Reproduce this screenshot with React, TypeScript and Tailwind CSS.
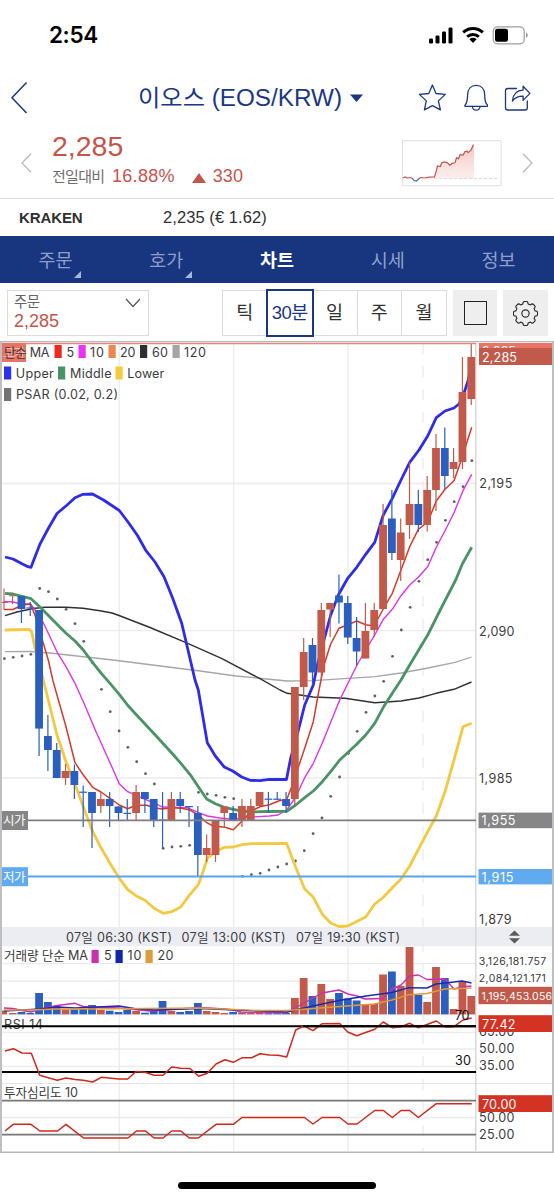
import React from "react";

const RED = "#c25a4b";
const BLUE = "#2b5fbf";

const candleX = (i: number) => 3.8 + i * 8.82;

// [index, direction, high, body top, body bottom, low, volume top]
type Candle = [number, "u" | "d", number, number, number, number, number];
const candles: Candle[] = [
  [2, "d", 596, 596, 609, 623, 1012],
  [3, "d", 602, 607.4, 608.6, 616, 1013],
  [4, "d", 610, 610, 728.6, 756, 993],
  [5, "d", 715, 736, 750, 771, 1002],
  [6, "d", 743, 750, 778, 778, 1006],
  [7, "u", 764, 771, 778, 785, 1009.5],
  [8, "d", 764.5, 771, 785, 799, 1009.5],
  [9, "d", 785.5, 791.6, 792.8, 827, 1009],
  [10, "d", 792, 792, 813, 848, 1005],
  [11, "u", 792, 799, 806, 813, 1010],
  [12, "d", 792, 799, 806, 827, 1010.7],
  [13, "d", 806, 806.5, 813, 820, 1012],
  [14, "d", 799, 812.8, 814, 820, 1010],
  [15, "u", 785, 792, 813, 820, 1011],
  [16, "d", 792, 792, 799, 813, 1012.7],
  [17, "d", 799, 799, 820, 827, 1011],
  [18, "d", 792, 819.5, 820.5, 848, 1001],
  [19, "u", 792, 799, 820, 820, 1011],
  [20, "d", 792, 799, 806, 813, 1012],
  [21, "d", 806, 806, 807.2, 827, 1011],
  [22, "d", 806, 813, 855, 876, 1003],
  [23, "u", 834.5, 848, 855, 862, 1011],
  [24, "u", 820, 820, 855, 862, 1012],
  [25, "u", 806, 806.5, 813, 827, 1013],
  [26, "d", 806, 813, 820, 820, 1012],
  [27, "u", 799, 806, 820, 827, 1012.5],
  [28, "u", 799, 806, 820, 820, 1013],
  [29, "u", 792, 792, 806, 806, 1013],
  [30, "d", 792, 798.6, 799.8, 813, 1013.2],
  [31, "d", 792, 798.6, 799.8, 800, 1013.2],
  [32, "d", 792, 799, 806, 813, 1013],
  [33, "u", 687, 687, 799, 806, 998],
  [34, "u", 638, 652, 687, 700, 978],
  [35, "d", 638, 645, 672.5, 685, 996],
  [36, "u", 603, 610, 672.5, 680, 984],
  [37, "u", 603, 603, 609.5, 637, 999],
  [38, "d", 574.5, 595.5, 602.5, 623.5, 993],
  [39, "d", 596, 603, 637.5, 644, 998.5],
  [40, "d", 617, 638, 651.5, 665.5, 1000.5],
  [41, "u", 603, 631, 658.5, 658.5, 1004],
  [42, "u", 603, 610, 630, 637, 1004],
  [43, "u", 504, 525, 609, 609, 974.5],
  [44, "d", 490, 518.5, 553, 560, 971.5],
  [45, "u", 518.5, 532.5, 560, 581, 986],
  [46, "u", 462, 504, 525, 539, 947],
  [47, "d", 490, 504, 525, 532, 995],
  [48, "u", 476, 490, 525, 531.5, 1002],
  [49, "u", 434, 448, 490, 511, 967],
  [50, "d", 427.5, 448, 476, 489, 978],
  [51, "u", 448, 462, 469, 478, 1009],
  [52, "u", 357, 392, 462, 469, 981],
  [53, "u", 344, 357, 399, 405, 996],
];

const lines = {
  ma120: "5,651.7 30,651.5 50,653 113,660 200,671 236,676 287,681 313,680.7 375,676.7 401,673 428,668 455,662.3 471.7,657",
  ma60: "5,615.7 17,612 33,608.5 45,607.3 66,607.3 83,608.3 100,610.7 112,613 119,615.5 150,627.5 186,642.7 222,658.7 260,678.7 280,690 287,693.3 300,695 313,697 345,698.3 374.7,702.7 401,701 419,698 436,693.3 454,689.3 471.5,682",
  lower: "5,630 29,629.3 31.7,632 35,648 43.3,680 48.3,700 57,735 66,761.7 76,786.7 83.3,806.7 92.7,831.7 101.3,848.3 110,863.3 119.3,878.3 127.7,889.7 136,895.7 145,900.3 154,908.3 163.3,913.3 171.7,911.7 180.7,907 189.3,895.3 198.3,884.7 202.7,872.7 207.3,858.3 215.3,851.7 224.3,847.3 233.3,847 242.3,844.7 251.7,843.7 286.7,843.5 295.7,867.3 304.7,889 313.3,897.3 322.3,914.3 330.7,923 339,926.5 347.7,926 365.7,917 374.7,904 383.3,897.3 392.3,887.7 401,879 409.7,866 427.7,831.7 436.3,816 445,791.7 454,760 463,726.7 471.7,723.3",
  upper: "5,557 13,559 22.5,564 28,566.7 31,567.3 39.7,544.7 48,529 57,513.5 66.5,505.5 75,497.7 83,494.3 92.5,494 103.5,500 119.3,510.5 128,522 137.5,535.5 146,550.7 155,562 164,576.7 172.7,598.3 181.7,623.3 195,680 198.3,690 207.3,742.7 215.3,756 224.3,767 232.7,771 241.7,777 250,780.3 260,780.6 269.3,779.3 286.5,779.5 290.7,758 298,731.7 304.7,705 313.3,685 317.3,665 324,640 330.7,615 338.3,595 347.7,578.3 356.7,567.3 365.7,554.3 374.7,542.3 383.3,515 392.3,498.3 401,480 409.7,462.3 419,450 427.7,436 436.3,417.7 445,411 454,408 459,404 464,393.3 468.3,380 471,366",
  middle: "5,593.3 13,594 31,598.7 40,607 66,633.3 75,641 83.3,650 92.7,662.7 101.3,673.3 110,683.3 119.3,694.3 128.3,706 137.3,715.7 155,734.7 172.7,754 181.7,764.3 190.7,775.3 199.3,788.3 206.7,799 215.3,803.7 224.3,807.3 238,810.3 251.7,812 267,811.5 286.7,811.3 295.7,805 304.7,797.7 313.3,791 322.3,781.7 330.7,771.7 339.7,760 356.7,744.3 365.7,735 374.7,723.3 383.3,707.3 392.3,693.3 401,680 409.7,665 427.7,635 440.7,609 455.7,580 462.3,564 471.7,547.3",
  ma10: "3.7,601.5 13,602 22,604 30.5,604 41,618 48.3,633.3 57.7,653.3 66,666.7 75,683.3 83.3,701.7 96.7,733.3 110,762.7 119.3,783.7 127.7,791.7 136,795.3 142,798 155,803.3 162.3,807 187,807.7 198.7,812.7 207.3,816 220,818 233,819.3 251.7,817 269.3,816 278,815 286.7,810 295.7,797 304.7,777.7 313.3,763.3 322.3,743 339.7,700 357,665 365.7,650 374.7,635 383.3,619.3 392.3,609.3 401,595.7 409.7,585 418.3,577.3 427.7,566.7 436.3,547.3 445,530.7 454,512.7 463,490.7 471.7,474.3",
  ma5: "3.7,609.5 13,609.5 22,605 30.5,604 36,618 43.3,643.3 48.3,660 53,681 66,726.7 75,762.7 83.3,775 92.7,787.3 101,792 110,798.3 119.3,805 127.7,808.7 136,805.3 146.7,805.3 154,807.7 162.3,809 171.7,807.7 181.7,808.3 190,810 198.7,815.3 206.7,822.7 213.3,826 225,827.3 233.3,829.7 242.3,820.7 251.7,810.7 260,806.7 269.3,804.7 279.3,800.7 286.7,799.5 292,786 304.7,748.3 313.3,721.7 319,690 324,665 330.7,644 339,628.3 347.7,624.7 356.7,621 365.7,624.7 374,626 383.3,609 392.3,593.3 401,570 409.7,546.7 418.3,529.3 427.7,522 436.3,501 445,489.3 454,480.7 460.7,461.7 471.7,427.3",
  vol5: "4,1008 13,1008.5 22,1010.5 31,1012 40,1009 57,1005.5 75,1003.3 83,1006.5 92,1007 119,1008 150,1011 200,1007.5 225,1009 233,1010 241,1012 286,1013 304,1003 322,993 339,990 348,994 357,996 365,999 383,998.5 392,989 401,985 409.7,976 418.5,975 427,979.5 445,979 454,989 462,987 471.5,986",
  vol10: "4,1011 40,1009 57,1007 75,1008 119,1006 137,1009 155,1010 200,1008.5 260,1011 287,1012 313,1006 339,1000.5 366,996 392,992.5 409,987.7 427,988 436,984 454,982 462,981 471.5,983",
  vol20: "4,1010 30,1010 57,1009 90,1009 200,1008 260,1010.5 287,1010.5 340,1006.5 374,1004 392,1000 409,994.7 427,993.5 445,989 471.5,988",
  rsi: "5,1051 13.3,1048.7 22,1053 31.3,1053.3 39.7,1075.3 48.3,1077.7 57.3,1080.3 66,1078 75,1079.5 83.3,1080.3 92.7,1082 101.3,1077.3 119,1079 127.7,1079 136,1071.5 145,1072.3 154,1075.3 163,1075.3 171.7,1067 180.7,1068.3 190,1068.5 198.7,1076.3 207.3,1073.3 216,1064 225,1059.7 233.3,1062.3 242.3,1057.7 251.7,1057.7 260,1053.7 269.3,1055 278,1055.3 286.7,1057 295.7,1030 304,1026 313,1030.7 322.3,1023.7 339.7,1023.5 347.7,1032 356.7,1035.7 374.7,1029.3 383.3,1022 392.3,1027.7 401,1026.7 409.7,1023.3 418.3,1027.7 427.7,1024.3 436.3,1021 445,1027 454,1026.7 463,1020 471.7,1018",
  mind: "5,1131 13.3,1124.3 31,1124.3 40,1131 57.5,1131 66,1124.3 83.5,1138 128,1138 136.5,1131 145.5,1131 154,1138 163,1138 171.7,1131 180.7,1131 189.3,1138 198.3,1138 216,1124.3 233.3,1124.3 242,1117.5 304.5,1117.5 313,1124 322,1117.5 339.7,1117.5 348,1124 357,1124 374.7,1110.5 383.5,1110.5 392.3,1117.5 401,1110.5 409.7,1110.5 418.3,1117.5 436.3,1103.7 471.7,1103.7",
};

const psar = [
  658.7, 657.3, 656, 654.3, 588.5, 591.7, 599, 609.3, 623.7, 641.3, 662.7, 689.3, 711.7, 731, 747.3, 761.7, 773.7, 784,
  848.3, 847, 846.3, 845.3, 792.3, 794, 795.3, 797.3, 798.7, 876.3, 874.7, 873.3, 870, 867, 864, 861, 850.7,
  833.7, 818, 796.3, 777, 753.3, 731.3, 712.3, 696, 681.3, 656.3, 630, 607.3, 581.3, 559.7, 542.3, 520.3, 501.7, 486.7, 460.7,
];

type TProps = { x: number; y: number; w: number; s?: number; fill?: string; children: string };
const T = ({ x, y, w, s = 12.6, fill = "#3c3c3c", children }: TProps) => (
  <text x={x} y={y} textLength={w} fontSize={s} fill={fill}>
    {children}
  </text>
);

const swatches: [number, number, string][] = [
  [55, 345, "#ea2a1e"], [79, 345, "#ea33f7"], [109, 345, "#ee864f"], [140.5, 345, "#2f2f2f"], [173, 345, "#a5a5a5"],
  [4.5, 366.5, "#2b31ee"], [58.5, 366.5, "#4b9366"], [116, 366.5, "#f4cb3f"], [4.5, 388, "#737373"],
  [92, 950, "#c92fae"], [116, 950, "#1226aa"], [146, 950, "#e09a38"],
];

function Chart() {
  return (
    <svg
      viewBox="0 341 554 812"
      className="block h-[812px] w-[554px] shrink-0 font-['Inter','Noto_Sans_CJK_KR',sans-serif]"
      fill="none"
    >
      <g stroke="#ebebed" strokeWidth="1.3">
        <path d="M119.2 343V1151M233.7 343V1151M348 343V1151" />
        <path d="M2 483.5H476M2 630.7H476M2 778H476M2 963.7H476M2 981H476M2 998H476M2 1032.3H476M2 1049H476M2 1066.3H476M2 1117.5H476" />
        <path d="M423 343V1151" strokeDasharray="11 12" />
      </g>
      <path d="M2 1083.5H552M2 1014.6H476" stroke="#e4e4e6" strokeWidth="1.2" />
      <rect x="2" y="927" width="550" height="19.3" fill="#ecedf3" />
      <path d="M475.8 343V1151" stroke="#d5d5d9" strokeWidth="1.4" />

      <g fill="#606060">
        {psar.map((y, i) => (
          <circle key={i} cx={candleX(i) + 0.6} cy={y} r="1.4" />
        ))}
      </g>

      <g strokeLinejoin="round">
        <polyline points={lines.ma120} stroke="#a6a6a6" strokeWidth="1.3" />
        <polyline points={lines.ma60} stroke="#303030" strokeWidth="1.4" />
        <polyline points={lines.lower} stroke="#f2c940" strokeWidth="2.8" />
        <polyline points={lines.upper} stroke="#2e2ce6" strokeWidth="2.8" />
        <polyline points={lines.ma10} stroke="#dd35e6" strokeWidth="1.4" />
        <polyline points={lines.ma5} stroke="#d63a2a" strokeWidth="1.5" />
        <polyline points={lines.middle} stroke="#4b9366" strokeWidth="2.8" />
      </g>

      <path d="M4 588.5V609.5M0 602.5H7.5M12.6 595.5V604M9 595.8H16" stroke={RED} strokeWidth="1.1" />
      {candles.map(([i, dir, hi, top, bottom, lo, vol]) => {
        const x = candleX(i);
        return (
          <g key={i} fill={dir === "u" ? RED : BLUE}>
            <rect x={x - 0.6} y={hi} width="1.2" height={lo - hi} />
            <rect x={x - 3.9} y={top} width="7.8" height={bottom - top} />
            <rect x={x - 3.9} y={vol} width="7.8" height={1014.3 - vol} />
          </g>
        );
      })}
      <rect x="2" y="1010.5" width="5" height="3.8" fill={RED} />
      <rect x="9" y="1013" width="7.6" height="1.3" fill={RED} />

      <g strokeLinejoin="round" strokeWidth="1.4">
        <polyline points={lines.vol5} stroke="#c92fae" />
        <polyline points={lines.vol10} stroke="#1c2ab0" />
        <polyline points={lines.vol20} stroke="#e09a38" />
      </g>

      <path d="M2 820.4H476" stroke="#7f7f7f" strokeWidth="1.9" />
      <path d="M2 876.5H476" stroke="#58a6ee" strokeWidth="1.9" />
      <path d="M2 343.5H476" stroke="#e0897e" strokeWidth="1.6" />

      <rect x="2" y="811" width="26" height="19" fill="#868686" />
      <T x={3} y={825.3} w={22.5} s={12.5} fill="#fff">시가</T>
      <rect x="2" y="867.2" width="26" height="19" fill="#60aaf0" />
      <T x={3} y={881.5} w={22.5} s={12.5} fill="#fff">저가</T>

      <rect x="2" y="343" width="24" height="19" fill="#e97465" />
      <T x={3} y={357.5} w={22} s={12.5} fill="#f6c7bf">고가</T>
      {swatches.map(([x, y, c]) => (
        <rect key={`${x}-${y}`} x={x - 0.5} y={y} width="7.2" height="13" fill={c} />
      ))}
      <T x={4} y={356.5} w={45.5}>단순 MA</T>
      <T x={66.5} y={356.5} w={7.5}>5</T>
      <T x={90} y={356.5} w={14}>10</T>
      <T x={120} y={356.5} w={15.5}>20</T>
      <T x={152} y={356.5} w={16}>60</T>
      <T x={184} y={356.5} w={22}>120</T>
      <T x={15.8} y={377.8} w={38}>Upper</T>
      <T x={70} y={377.8} w={41.5}>Middle</T>
      <T x={127.3} y={377.8} w={37}>Lower</T>
      <T x={16} y={399} w={102}>PSAR (0.02, 0.2)</T>

      <T x={479.3} y={488} w={33}>2,195</T>
      <T x={479} y={635.5} w={35.5}>2,090</T>
      <T x={479} y={782.8} w={33.5}>1,985</T>
      <T x={479} y={924.3} w={32.5}>1,879</T>

      <rect x="479" y="343" width="73" height="14" fill="#e97465" />
      <T x={482} y={355.5} w={34} fill="#fff">2,295</T>
      <rect x="479" y="348" width="73" height="17" fill={RED} />
      <T x={482} y={361.5} w={35} fill="#fff">2,285</T>
      <rect x="478.5" y="812.6" width="73.5" height="15.6" fill="#868686" />
      <T x={481.5} y={825.4} w={34} fill="#fff">1,955</T>
      <rect x="478.5" y="869" width="73.5" height="15.4" fill="#60aaf0" />
      <T x={481.5} y={882} w={32} fill="#fff">1,915</T>

      <T x={66} y={941.7} w={106}>07일 06:30 (KST)</T>
      <T x={181.5} y={941.7} w={104}>07일 13:00 (KST)</T>
      <T x={296} y={941.7} w={104}>07일 19:30 (KST)</T>
      <path d="M509 935.7h11l-5.5-5.2zM509 938.2h11l-5.5 5.2z" fill="#5c5c5c" />

      <T x={4} y={960} w={84}>거래량 단순 MA</T>
      <T x={104} y={960} w={7.5}>5</T>
      <T x={127.5} y={960} w={14}>10</T>
      <T x={157.5} y={960} w={16}>20</T>

      <T x={478.8} y={965} w={67.5} s={10.5}>3,126,181.757</T>
      <T x={478.8} y={982} w={67} s={10.5}>2,084,121.171</T>
      <rect x="478.5" y="986.8" width="73.5" height="17.4" fill={RED} />
      <T x={481.5} y={999.5} w={70.5} s={10.5} fill="#fff">1,195,453.056</T>

      <T x={4} y={1029} w={39}>RSI 14</T>
      <path d="M2 1026.3H476M2 1072H476" stroke="#000" strokeWidth="2" />
      <polyline points={lines.rsi} stroke="#d0281b" strokeWidth="1.5" strokeLinejoin="round" />
      <path d="M303 1026.3H476" stroke="#000" strokeWidth="2" />
      <T x={455} y={1020} w={14.5} fill="#111">70</T>
      <T x={455} y={1065} w={16} fill="#111">30</T>
      <T x={479} y={1036.3} w={35.5}>65.00</T>
      <rect x="478.5" y="1015.2" width="73.5" height="16.8" fill="#d43222" />
      <T x={482} y={1028.5} w={33.5} fill="#fff">77.42</T>
      <T x={479} y={1053.3} w={35.5}>50.00</T>
      <T x={479} y={1070.3} w={35.5}>35.00</T>

      <T x={4} y={1097} w={74}>투자심리도 10</T>
      <path d="M2 1100.6H476M2 1134.6H476" stroke="#777" strokeWidth="1.6" />
      <polyline points={lines.mind} stroke="#d0281b" strokeWidth="1.5" strokeLinejoin="round" />
      <T x={479} y={1121.8} w={35.5}>50.00</T>
      <rect x="478.5" y="1095.2" width="73.5" height="16.8" fill="#d43222" />
      <T x={482} y={1108.5} w={34.5} fill="#fff">70.00</T>
      <T x={479} y={1138.6} w={35.5}>25.00</T>

      <path d="M1 341V1152.3H553V341" stroke="#b9b9bb" strokeWidth="1.8" />
      <path d="M0 341.7H554" stroke="#b9b9bb" strokeWidth="1.2" />
    </svg>
  );
}

function StatusBar() {
  return (
    <div className="flex h-[70px] shrink-0 items-center justify-between pr-[26px] pl-[49px]">
      <span className="font-['Inter',sans-serif] text-[22.5px] leading-none font-semibold tracking-[-0.4px] text-black">2:54</span>
      <svg viewBox="428 24 100 24" className="mt-[2px] h-6 w-[100px]" fill="none">
        <g fill="#000">
          <rect x="429" y="38.5" width="4" height="5" rx="1.2" />
          <rect x="435.5" y="35.5" width="4" height="8" rx="1.2" />
          <rect x="442" y="31.5" width="4" height="12" rx="1.2" />
          <rect x="448.5" y="27.5" width="4" height="16" rx="1.2" />
        </g>
        <g stroke="#000" strokeWidth="3">
          <path d="M463.2 32.4a14 14 0 0 1 19.6 0" />
          <path d="M467.2 36.8a8.3 8.3 0 0 1 11.6 0" />
        </g>
        <path d="M473 43l-3.6-3.7a5.1 5.1 0 0 1 7.2 0z" fill="#000" />
        <rect x="493.2" y="26.8" width="31" height="17" rx="4.4" stroke="#9d9d9d" strokeWidth="1.2" />
        <path d="M526 32.7c2.2 1 2.2 4 0 5z" fill="#8f8f8f" />
        <rect x="495" y="28.8" width="13" height="13" rx="2.2" fill="#000" />
      </svg>
    </div>
  );
}

function TitleBar() {
  return (
    <header className="flex h-[58px] shrink-0 items-center pb-[2px] text-[#1b3784]">
      <svg viewBox="0 0 20 34" className="ml-[10px] h-[34px] w-5" fill="none">
        <path d="M16.5 1.5L2 16.7L16.5 32" stroke="#1b3784" strokeWidth="1.5" />
      </svg>
      <div className="ml-[108px] flex items-center gap-[7px]">
        <svg className="h-8 w-[205px] font-['Liberation_Sans','Noto_Sans_CJK_KR',sans-serif]" viewBox="0 0 205 32">
          <text x="0" y="24" fontSize="23" textLength="204" lengthAdjust="spacingAndGlyphs" fill="#1b3784">
            이오스 (EOS/KRW)
          </text>
        </svg>
        <svg viewBox="0 0 13 8" className="h-2 w-[13px]">
          <path d="M0 .5h13L6.5 8z" fill="#1b3784" />
        </svg>
      </div>
      <svg viewBox="416 82 72 32" className="ml-[53px] h-8 w-[72px]" fill="none" stroke="#1b3784" strokeWidth="1.3" strokeLinejoin="round" strokeLinecap="round">
        <path d="M432.4 85l3.6 8.5 9.3.9-6.9 6.5 2 9-8-4.3-8 4.300 1.900-9-6.900-6.500 9.400-.9z" />
        <path d="M465 105.3c2.300-2.400 2.500-4.700 2.600-10.300 0-6 3.500-9.600 8.600-9.600s8.500 3.600 8.500 9.600c0 5.600.3 7.900 2.900 10.300.4.600.2 1-.5 1h-21.700c-.7 0-.9-.4-.4-1z" />
        <path d="M472.3 106.5c.4 2.500 2 3.700 3.900 3.700s3.500-1.200 3.900-3.700" />
      </svg>
      <svg viewBox="504 84 28 28" className="ml-[15px] h-7 w-7" fill="none" stroke="#1b3784" strokeWidth="1.3" strokeLinejoin="round" strokeLinecap="round">
        <path d="M517.5 88.500h-8.700c-1.500 0-2.300.8-2.300 2.300v16.900c0 1.500.8 2.300 2.300 2.300h17.200c1.500 0 2.300-.8 2.300-2.300v-6.700" />
        <path d="M513.4 101c.7-7.300 4.700-10.800 10.700-10.900v-3.900l6.800 7.200-6.800 7v-4.200c-4.600-.1-7.700 1-10.700 4.800z" />
      </svg>
    </header>
  );
}

function PriceSummary() {
  return (
    <section className="flex h-[71px] shrink-0 items-center border-b border-[#e2e3e6] font-['Liberation_Sans','Noto_Sans_CJK_KR',sans-serif]">
      <svg viewBox="0 0 12 20" className="ml-5 h-5 w-3" fill="none">
        <path d="M11 .7L2 10L11 19.3" stroke="#b9b9b9" strokeWidth="1.3" />
      </svg>
      <div className="ml-5 flex h-full flex-col pt-[2px] text-[#c5544b]">
        <div className="text-[28.5px] leading-[33px]">2,285</div>
        <div className="flex items-center text-[18px] leading-[27px]">
          <span className="w-[60px] shrink-0 text-[15px] tracking-[-0.7px] whitespace-nowrap text-[#6f6f6f]">전일대비</span>
          <span className="tracking-[0.3px]">16.88%</span>
          <svg viewBox="0 0 14 10" className="mt-[3px] ml-[17px] h-[10px] w-[14px]">
            <path d="M7 0l7 10H0z" fill="#c5544b" />
          </svg>
          <span className="ml-[7px]">330</span>
        </div>
      </div>
      <svg viewBox="401 140 101 47" className="mr-[20px] ml-auto h-[47px] w-[101px]" fill="none">
        <rect x="402.5" y="140.7" width="98.5" height="45" stroke="#dfe0e2" />
        <defs>
          <linearGradient id="spark" x1="0" y1="0" x2="0" y2="1">
            <stop offset="0" stopColor="#f0aca6" stopOpacity=".7" />
            <stop offset="1" stopColor="#f7d5d2" stopOpacity=".4" />
          </linearGradient>
        </defs>
        <path d="M434 178.500l2-6 1.500-6 3 .5 1-3.500 3-1 3 .8 2.500 2.500 2-2 3-.5 1.500-5 2 .8 1.500-4 3 .5 2-3.500 2-.5 1 1.500 3-2.500 3-5.500V178.500z" fill="url(#spark)" />
        <path d="M434 178.5H499" stroke="#dcdcdc" strokeDasharray="3 2" />
        <path d="M403 178l2-1 2 1 3-.5 2 .7M419 178.500l2-1 4 .5 4-.8 5.500-.2 1.500-5 1.500-6 3 .5 1-3.500 3-1 3 .8 2.500 2.500 2-2 3-.5 1.500-5 2 .8 1.500-4 3 .5 2-3.500 2-.5 1 1.500 3-2.500 2.500-5.500" stroke="#c5544b" strokeWidth="1.2" />
        <path d="M412 178l2 2.500 2.500.7 3-3" stroke="#4366ad" strokeWidth="1.2" />
      </svg>
      <svg viewBox="0 0 12 20" className="mr-5 h-5 w-3" fill="none">
        <path d="M1 .7L10 10L1 19.3" stroke="#b9b9b9" strokeWidth="1.3" />
      </svg>
    </section>
  );
}

const tabs = [
  { label: "주문", more: true },
  { label: "호가", more: true },
  { label: "차트", active: true },
  { label: "시세" },
  { label: "정보" },
];

function Tabs() {
  return (
    <nav className="grid h-[47px] shrink-0 grid-cols-5 bg-[#183580] font-['Noto_Sans_CJK_KR',sans-serif]">
      {tabs.map((t) => (
        <div key={t.label} className="relative flex items-center justify-center">
          <span className={t.active ? "text-[18.5px] leading-none font-bold text-white" : "text-[18.5px] leading-none text-[#8f9fc9]"}>
            {t.label}
          </span>
          {t.more && (
            <svg viewBox="0 0 7 7" className="absolute right-[30px] bottom-[5px] size-[7px]">
              <path d="M7 0V7H0z" fill="#a9b6d8" />
            </svg>
          )}
        </div>
      ))}
    </nav>
  );
}

const gearPath = (() => {
  const pts: string[] = [];
  for (let i = 0; i < 8; i++) {
    const c = (i * Math.PI) / 4 - Math.PI / 2;
    [[-0.27, 9.5], [-0.19, 11.2], [-0.1, 11.6], [0.1, 11.6], [0.19, 11.2], [0.27, 9.5]].forEach(([a, r]) => {
      pts.push(`${(12 + r * Math.cos(c + a)).toFixed(2)} ${(12 + r * Math.sin(c + a)).toFixed(2)}`);
    });
  }
  return `M${pts.join("L")}Z`;
})();

const periods = ["틱", "30분", "일", "주", "월"];

function Controls() {
  return (
    <section className="flex h-[58px] shrink-0 items-start pt-[7px] pr-[6px] pl-[7px] font-['Liberation_Sans','Noto_Sans_CJK_KR',sans-serif]">
      <div className="flex h-[46px] w-[142px] items-start justify-between border border-[#dcdcdf] pt-[3px] pr-[7px] pl-[6px]">
        <div>
          <div className="text-[14.5px] leading-[17px] tracking-[-0.5px] text-[#666]">주문</div>
          <div className="text-[18px] leading-[20px] text-[#c5544b]">2,285</div>
        </div>
        <svg viewBox="0 0 16 10" className="mt-[4px] h-[10px] w-[16px]" fill="none">
          <path d="M1 1l7 7.500 7-7.500" stroke="#555" strokeWidth="1.2" />
        </svg>
      </div>
      <div className="ml-[73px] flex h-[46px] w-[225px] border border-[#dcdcdf] text-[18.5px] text-[#333]">
        {periods.map((p) => (
          <div
            key={p}
            className={
              p === "30분"
                ? "-my-px -ml-px flex w-[46px] shrink-0 items-center justify-center border border-[#1b3784] tracking-[-0.5px] whitespace-nowrap text-[#1b3784] outline-[0.5px] outline-[#1b3784]"
                : "flex flex-1 items-center justify-center border-r border-[#dcdcdf] last:border-r-0"
            }
          >
            {p}
          </div>
        ))}
      </div>
      <div className="ml-[6px] flex h-[46px] w-[44px] items-center justify-center bg-[#eee]">
        <div className="h-[24px] w-[23px] border border-[#222]" />
      </div>
      <div className="ml-[6px] flex h-[46px] w-[45px] items-center justify-center bg-[#eee]">
        <svg viewBox="0 0 24 24" className="h-[25px] w-[25px]" fill="none" stroke="#2a2a2a" strokeWidth="1.1" strokeLinejoin="round">
          <path d={gearPath} />
          <circle cx="12" cy="12" r="3.5" />
        </svg>
      </div>
    </section>
  );
}

export default function App() {
  return (
    <main className="flex h-[1200px] w-[554px] flex-col overflow-hidden bg-white">
      <StatusBar />
      <TitleBar />
      <PriceSummary />
      <section className="flex h-[37px] shrink-0 items-center pl-[19px] font-['Liberation_Sans',sans-serif] text-[#2f2f2f]">
        <span className="mt-[2px] w-[144px] text-[15px] font-bold tracking-[-0.1px]">KRAKEN</span>
        <span className="text-[16.5px] tracking-[0.08px]">2,235 (€ 1.62)</span>
      </section>
      <Tabs />
      <Controls />
      <Chart />
      <div className="flex flex-1 justify-center pt-[29px]">
        <div className="h-[7px] w-[198px] rounded-full bg-black" />
      </div>
    </main>
  );
}
